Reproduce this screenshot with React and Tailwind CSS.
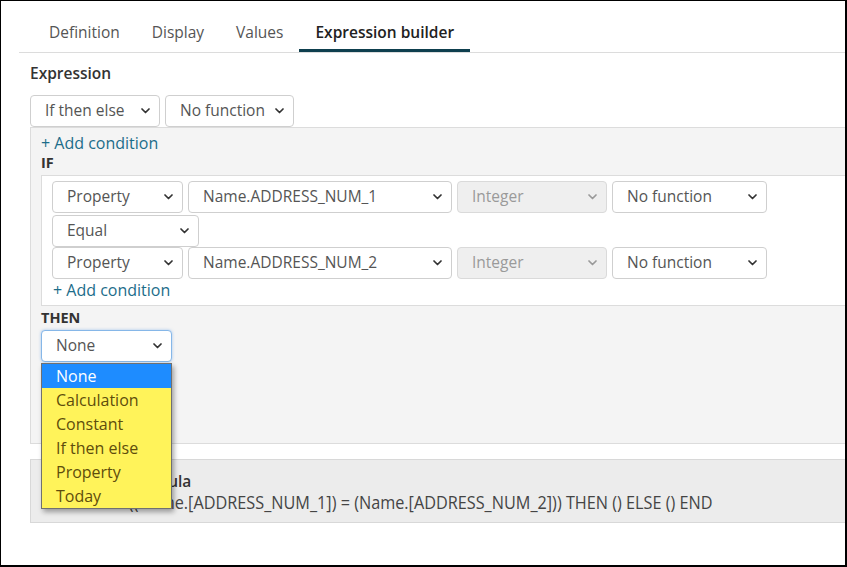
import React from "react";

const FONT = { fontFamily: "'Open Sans', 'Noto Sans', sans-serif" };

function Chevron({ disabled }) {
  return (
    <svg width="9" height="6" viewBox="0 0 9 6" className="shrink-0">
      <path d="M1 1 L4.5 4.5 L8 1" fill="none" stroke={disabled ? "#9a9a9a" : "#333"} strokeWidth="1.7" strokeLinecap="round" strokeLinejoin="round" />
    </svg>
  );
}

function Sel({ label, w, disabled, focus, className = "" }) {
  return (
    <div
      className={`flex h-[32px] shrink-0 items-center justify-between rounded-[4px] border pl-[14px] pr-[9px] text-[15.5px] ${
        disabled ? "border-[#dadada] bg-[#efefef] text-[#9a9a9a]" : focus ? "border-[#86b7e8] bg-white text-[#555] shadow-[0_0_3px_rgba(80,150,230,0.5)]" : "border-[#cfcfcf] bg-white text-[#555]"
      } ${w} ${className}`}
    >
      <span className="leading-none">{label}</span>
      <Chevron disabled={disabled} />
    </div>
  );
}

export default function App() {
  return (
    <div className="h-[567px] w-[847px] overflow-hidden border-b-2 border-l border-r-2 border-t border-black bg-white" style={FONT}>
      <div className="w-[900px]">
        {/* Tabs */}
        <div className="ml-[18px] flex border-b border-[#dcdcdc] pl-[14px] pt-[13px]">
          {["Definition", "Display", "Values"].map((t) => (
            <div key={t} className="flex h-[38px] items-center px-[16px] pb-[1px] text-[15.5px] text-[#555]">
              {t}
            </div>
          ))}
          <div className="flex h-[38px] items-center border-b-[3px] border-[#0e3f4e] px-[16px] pt-[2px] text-[15.5px] font-semibold text-[#222]">
            Expression builder
          </div>
        </div>

        <div className="pl-[29px]">
          <div className="mt-[11px] text-[15.5px] font-semibold leading-[18px] text-[#333]">Expression</div>
          <div className="mt-[13px] flex gap-[5px]">
            <Sel label="If then else" w="w-[130px]" />
            <Sel label="No function" w="w-[129px]" />
          </div>

          {/* IF/THEN panel */}
          <div className="border border-[#dcdcdc] bg-[#f4f4f4] pb-[17px] pl-[10px]">
            <div className="mt-[5px] text-[16px] leading-[20px] text-[#1c6d8a]">+ Add condition</div>
            <div className="text-[14.5px] font-bold leading-[20px] text-[#333]">IF</div>
            <div className="mt-[2px] border border-[#dcdcdc] bg-white pb-[5px] pl-[10px] pt-[5px]">
              <div className="flex gap-[5px]">
                <Sel label="Property" w="w-[131px]" />
                <Sel label="Name.ADDRESS_NUM_1" w="w-[264px]" />
                <Sel label="Integer" w="w-[150px]" disabled />
                <Sel label="No function" w="w-[155px]" />
              </div>
              <div className="mt-[2px]">
                <Sel label="Equal" w="w-[147px]" />
              </div>
              <div className="flex gap-[5px]">
                <Sel label="Property" w="w-[131px]" />
                <Sel label="Name.ADDRESS_NUM_2" w="w-[264px]" />
                <Sel label="Integer" w="w-[150px]" disabled />
                <Sel label="No function" w="w-[155px]" />
              </div>
              <div className="mt-[1px] pl-[1px] text-[16px] leading-[20px] text-[#1c6d8a]">+ Add condition</div>
            </div>
            <div className="mt-[2px] text-[14.5px] font-bold leading-[20px] text-[#333]">THEN</div>
            <div className="relative mt-[2px] h-[96px]">
              <Sel label="None" w="w-[131px]" focus />
              <div className="absolute left-0 top-[33px] z-10 w-[131px] border border-[#707070] bg-[#fff35a] shadow-[2px_3px_5px_rgba(0,0,0,0.35)]">
                <div className="flex h-[24px] items-center bg-[#1e8cff] pl-[14px] text-[16px] text-white">None</div>
                {["Calculation", "Constant", "If then else", "Property", "Today"].map((o) => (
                  <div key={o} className="flex h-[24px] items-center pl-[14px] text-[16px] text-[#5e4d0c]">
                    {o}
                  </div>
                ))}
              </div>
            </div>
          </div>

          {/* Formula */}
          <div className="mt-[15px] h-[64px] border border-[#d8d8d8] bg-[#ececec] pt-[11px]">
            <div className="pl-[98px] text-[15.5px] font-semibold leading-[20px] text-[#333]">Formula</div>
            <div className="mt-[1px] origin-left scale-x-[0.928] whitespace-nowrap pl-[87px] text-[17.5px] leading-[21px] text-[#444]">
              IF ((Name.[ADDRESS_NUM_1]) = (Name.[ADDRESS_NUM_2])) THEN () ELSE () END
            </div>
          </div>
        </div>
      </div>
    </div>
  );
}
